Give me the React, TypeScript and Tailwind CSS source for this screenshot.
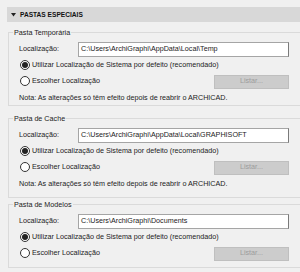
type Group = {
  title: string
  path: string
  note?: boolean
  top: string
  inner: string
}

const groups: Group[] = [
  { title: 'Pasta Temporária', path: 'C:\\Users\\ArchiGraphi\\AppData\\Local\\Temp', note: true, top: 'mt-[10px]', inner: 'h-[74px]' },
  { title: 'Pasta de Cache', path: 'C:\\Users\\ArchiGraphi\\AppData\\Local\\GRAPHISOFT', note: true, top: 'mt-[12px]', inner: 'h-[80px]' },
  { title: 'Pasta de Modelos', path: 'C:\\Users\\ArchiGraphi\\Documents', top: 'mt-[6px]', inner: 'h-[64px]' },
]

function Radio({ checked, label }: { checked?: boolean; label: string }) {
  return (
    <div className="flex items-center">
      <span className="ml-[11px] w-[10px] h-[10px] rounded-full border border-[#333] bg-white flex items-center justify-center">
        {checked && <span className="w-[6px] h-[6px] rounded-full bg-[#222]" />}
      </span>
      <span className="ml-[2px]">{label}</span>
    </div>
  )
}

function PathGroup({ g }: { g: Group }) {
  return (
    <div className={`relative ${g.top} ml-[1px] border-t border-l border-b border-[#dadada] ${g.inner}`}>
      <span className="absolute -top-[6px] left-[4px] bg-[#f0f0f0] px-[1px] leading-[11px]">{g.title}</span>
      <div className="flex items-center mt-[9px] h-[15px]">
        <span className="ml-[10px] w-[59px]">Localização:</span>
        <div className="w-[211px] h-[15px] bg-white border border-[#a5a5a5] border-r-[#7a7a7a] flex items-center pl-[2px]">
          {g.path}
        </div>
      </div>
      <div className="mt-[1px] h-[14px] flex items-center">
        <Radio checked label="Utilizar Localização de Sistema por defeito (recomendado)" />
      </div>
      <div className="mt-[2px] h-[15px] flex items-center justify-between">
        <Radio label="Escolher Localização" />
        <div className="mr-[11px] w-[75px] h-[14px] bg-[#cccccc] border border-[#bfbfbf] text-[#9c9c9c] flex items-center justify-center">
          Listar...
        </div>
      </div>
      {g.note && (
        <div className="mt-[2px] h-[14px] flex items-center pl-[10px]">
          Nota: As alterações só têm efeito depois de reabrir o ARCHICAD.
        </div>
      )}
    </div>
  )
}

export default function App() {
  return (
    <div
      className="w-[300px] h-[272px] overflow-hidden bg-[#f0f0f0] pt-[7px] pl-[7px] text-[7.2px] text-[#1c1c1c]"
      style={{ fontFamily: '"Liberation Sans", Arial, sans-serif' }}
    >
      <div className="h-[15px] bg-[#d8d8d8] flex items-center">
        <svg width="5" height="4" viewBox="0 0 5 4" className="ml-[4px]">
          <path d="M0 0 H5 L2.5 3.5 Z" fill="#222" />
        </svg>
        <span className="ml-[4px] font-bold text-[6.6px] text-[#111]">PASTAS ESPECIAIS</span>
      </div>
      {groups.map((g) => (
        <PathGroup key={g.title} g={g} />
      ))}
    </div>
  )
}
